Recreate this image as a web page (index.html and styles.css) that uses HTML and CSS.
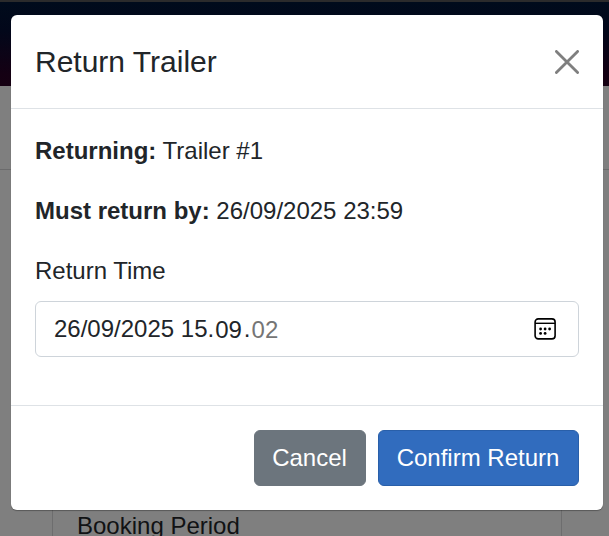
FILE: index.html
```html
<!DOCTYPE html>
<html lang="en">
<head>
<meta charset="utf-8">
<title>Return Trailer</title>
<link rel="stylesheet" href="styles.css">
</head>
<body>
<div class="page">
  <header class="banner"></header>
  <div class="toolbar"></div>
  <main class="content">
    <section class="card">Booking Period</section>
  </main>
</div>
<div class="modal" role="dialog" aria-labelledby="modal-title">
  <div class="modal-header">
    <h5 class="modal-title" id="modal-title">Return Trailer</h5>
    <button class="close" type="button" aria-label="Close">
      <svg width="24" height="24" viewBox="0 0 24 24"><path d="M1.4 1.4 22.6 22.6M22.6 1.4 1.4 22.6" fill="none" stroke="#7f7f7f" stroke-width="2.8" stroke-linecap="round"/></svg>
    </button>
  </div>
  <div class="modal-body">
    <p><strong>Returning:</strong> Trailer #1</p>
    <p><strong>Must return by:</strong> 26/09/2025 23:59</p>
    <div class="label">Return Time</div>
    <div class="field">
      <div class="value"><span class="date">26/09/2025 15.</span><span class="minutes">09</span><span class="dot">.</span><span class="seconds">02</span></div>
      <svg class="calendar" width="22" height="22" viewBox="0 0 22 22">
        <rect x="1.1" y="0.9" width="20" height="20" rx="3.2" fill="none" stroke="#000" stroke-width="1.6"/>
        <path d="M1.1 5.3h20" stroke="#000" stroke-width="1.4"/>
        <g fill="#000"><circle cx="6.6" cy="11" r="1.4"/><circle cx="11.1" cy="11" r="1.4"/><circle cx="15.6" cy="11" r="1.4"/><circle cx="6.6" cy="15.4" r="1.4"/><circle cx="11.1" cy="15.4" r="1.4"/></g>
      </svg>
    </div>
  </div>
  <div class="modal-footer">
    <button class="btn secondary" type="button">Cancel</button>
    <button class="btn primary" type="button">Confirm Return</button>
  </div>
</div>
</body>
</html>
```

FILE: styles.css
```css
* { box-sizing: border-box; }
body {
  margin: 0;
  height: 536px;
  overflow: hidden;
  background: #7f7f7f;
  color: #212529;
  font: 24px/36px "Liberation Sans", Arial, sans-serif;
}
.page { height: 536px; overflow: hidden; }
.banner {
  height: 86px;
  border-top: 2px solid #2b2b2c;
  background: linear-gradient(#000b1c, #02071a 35%, #140013 85%, #160012);
}
.toolbar {
  height: 84px;
  border-bottom: 1px solid #6b6b6c;
}
.content { padding: 230px 47px 0 52px; }
.card {
  height: 200px;
  padding: 107px 24px 0;
  border: 1px solid #6d6d6e;
  color: #111214;
}
.modal {
  position: absolute;
  top: 15px;
  left: 11px;
  width: 592px;
  height: 495px;
  border-radius: 6px;
  background: #fff;
  box-shadow: 0 1px 1px rgba(0, 0, 0, .3);
}
.modal-header {
  display: flex;
  align-items: center;
  justify-content: space-between;
  height: 94px;
  padding: 0 24px;
  border-bottom: 1px solid #dee2e6;
}
.modal-title { margin: 0; font-size: 30px; font-weight: 400; line-height: 45px; }
.close {
  display: flex;
  margin: 0;
  padding: 0;
  border: 0;
  background: none;
}
.modal-body { padding: 24px; }
.modal-body p { margin: 0 0 24px; }
.label { margin-bottom: 12px; }
.field {
  display: flex;
  align-items: center;
  justify-content: space-between;
  height: 56px;
  margin-bottom: 24px;
  padding: 0 22px 0 18px;
  border: 1px solid #ced4da;
  border-radius: 6px;
}
.value { display: flex; }
.minutes { padding: 1px 2px 0 1px; }
.dot { padding-right: 1px; }
.seconds { padding-top: 1px; color: #757575; }
.modal-footer {
  display: flex;
  justify-content: flex-end;
  gap: 12px;
  padding: 24px;
  border-top: 1px solid #dee2e6;
}
.btn {
  height: 56px;
  padding: 0 18px 0 17px;
  border: 1px solid;
  border-radius: 6px;
  color: #fff;
  font: inherit;
}
.secondary { width: 112px; background: #6c757d; border-color: #6c757d; }
.primary { width: 201px; background: #316cbe; border-color: #295fa9; }
```
